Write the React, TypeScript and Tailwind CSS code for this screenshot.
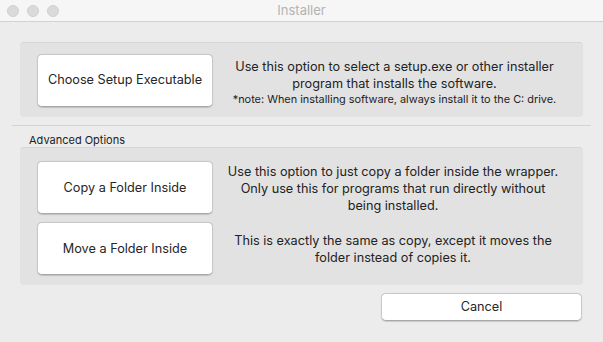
import React from "react";

const font = { fontFamily: "Inter, 'Noto Sans', sans-serif" };

function Btn({ children }: { children: React.ReactNode }) {
  return (
    <div className="w-[176px] h-[53px] shrink-0 bg-white rounded-[5px] border border-[#c8c8c8] border-b-[#a8a8a8] shadow-[0_0.5px_1px_rgba(0,0,0,0.15)] flex items-center justify-center text-[12.7px] text-[#262626]">
      {children}
    </div>
  );
}

export default function App() {
  return (
    <div className="w-[603px] h-[342px] bg-[#ececec] flex flex-col overflow-hidden" style={font}>
      <div className="h-[22px] shrink-0 bg-[#f6f6f6] border-b border-[#d1d1d1] flex items-center relative">
        <div className="flex gap-[8px] pl-[7px]">
          <div className="w-[12px] h-[12px] rounded-full bg-[#dadada] border border-[#d0d0d0]" />
          <div className="w-[12px] h-[12px] rounded-full bg-[#dadada] border border-[#d0d0d0]" />
          <div className="w-[12px] h-[12px] rounded-full bg-[#dadada] border border-[#d0d0d0]" />
        </div>
        <div className="absolute inset-0 flex items-center justify-center text-[13px] text-[#b4b4b4]">Installer</div>
      </div>
      <div className="flex flex-col px-[20px] pt-[20px]">
        <div className="h-[75px] bg-[#e2e2e2] rounded-[4px] border-t border-[#d6d6d6] flex items-center pl-[17px]">
          <Btn>Choose Setup Executable</Btn>
          <div className="flex-1 flex flex-col items-center text-[#222] pr-[7px] pt-[3px]">
            <div className="text-[12.7px] leading-[17px]">Use this option to select a setup.exe or other installer</div>
            <div className="text-[12.7px] leading-[17px]">program that installs the software.</div>
            <div className="text-[10.9px] leading-[14px]">*note: When installing software, always install it to the C: drive.</div>
          </div>
        </div>
      </div>
      <div className="mx-[12px] mt-[8px] border-t border-[#d4d4d4]" />
      <div className="pl-[29px] mt-[7px] text-[11px] leading-[14px] text-[#222]">Advanced Options</div>
      <div className="px-[20px]">
        <div className="h-[138px] bg-[#e2e2e2] rounded-[4px] border-t border-[#d6d6d6] flex flex-col gap-[8px] pl-[17px] pt-[13px]">
          <div className="flex items-center">
            <Btn>Copy a Folder Inside</Btn>
            <div className="flex-1 flex flex-col items-center text-[12.7px] leading-[17px] text-[#222] pr-[10px] pt-[1px]">
              <div>Use this option to just copy a folder inside the wrapper.</div>
              <div>Only use this for programs that run directly without</div>
              <div>being installed.</div>
            </div>
          </div>
          <div className="flex items-center">
            <Btn>Move a Folder Inside</Btn>
            <div className="flex-1 flex flex-col items-center text-[12.7px] leading-[17px] text-[#222] pr-[10px]">
              <div>This is exactly the same as copy, except it moves the</div>
              <div>folder instead of copies it.</div>
            </div>
          </div>
        </div>
      </div>
      <div className="flex justify-end pr-[21px] mt-[8px]">
        <div className="w-[201px] h-[28px] bg-white rounded-[5px] border border-[#c8c8c8] border-b-[#a8a8a8] shadow-[0_0.5px_1px_rgba(0,0,0,0.15)] flex items-center justify-center text-[12.7px] text-[#262626]">
          Cancel
        </div>
      </div>
    </div>
  );
}
